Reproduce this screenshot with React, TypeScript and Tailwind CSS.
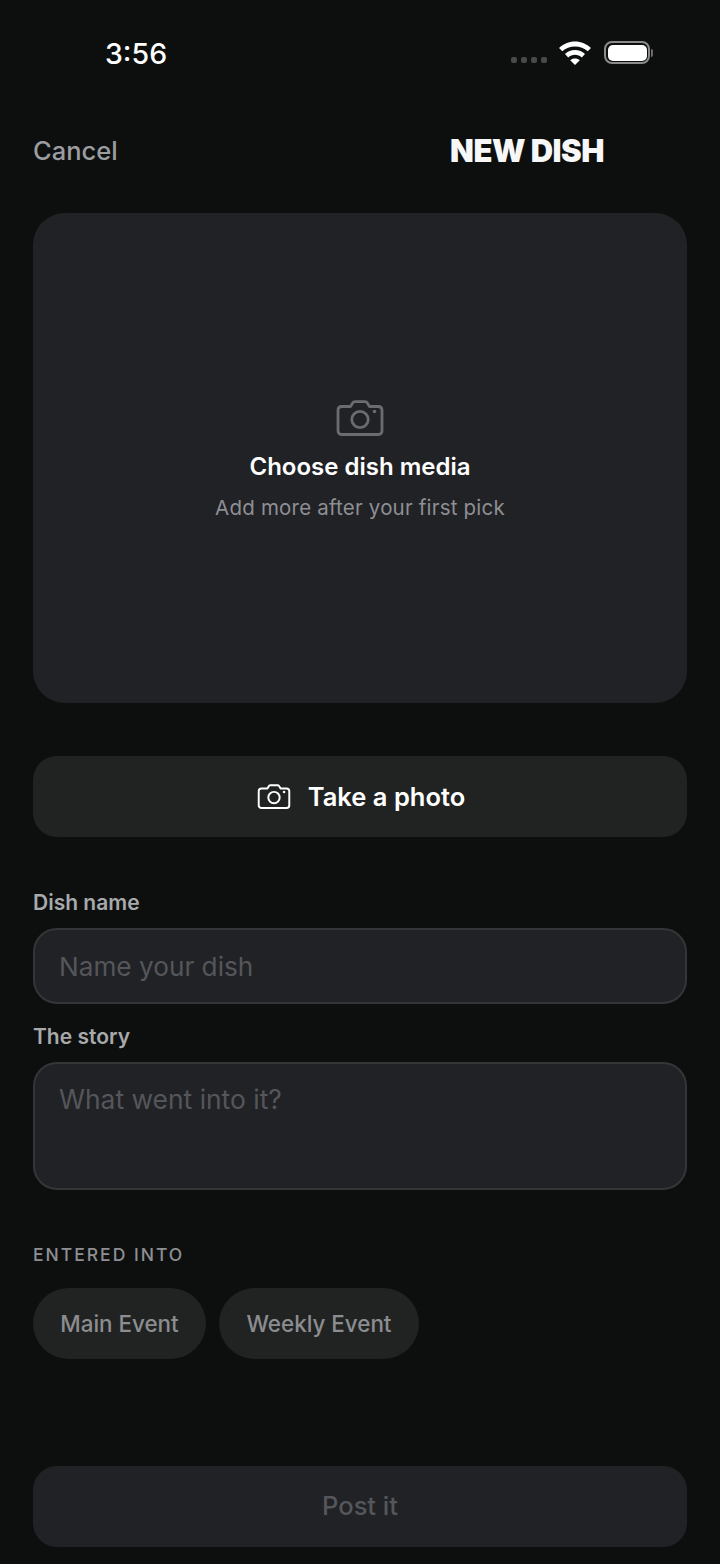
function CameraIcon({ className }: { className?: string }) {
  return (
    <svg viewBox="0 0 48 36" fill="none" stroke="currentColor" strokeWidth="2.800" strokeLinejoin="round" className={className}>
      <path d="M6 6.500h8.500l2.200-3.600c.5-.8 1.200-1.200 2.100-1.200h10.400c.9 0 1.600.4 2.100 1.200l2.200 3.600H42c2.400 0 4 1.600 4 4v20c0 2.400-1.600 4-4 4H6c-2.400 0-4-1.600-4-4v-20c0-2.400 1.600-4 4-4z" />
      <circle cx="24" cy="19.500" r="8.200" />
      <circle cx="38.500" cy="11.500" r="1.800" fill="currentColor" stroke="none" />
    </svg>
  );
}

function StatusBar() {
  return (
    <div className="flex h-[106px] items-start justify-between pl-[105px] pr-[67px] pt-[36px]">
      <span className="text-[28.500px] leading-[36px] font-medium text-white">3:56</span>
      <div className="flex items-center pt-[4px]">
        <div className="mt-[15px] flex gap-[4px]">
          <span className="h-[6px] w-[6px] rounded-[2px] bg-[#48494a]" />
          <span className="h-[6px] w-[6px] rounded-[2px] bg-[#48494a]" />
          <span className="h-[6px] w-[6px] rounded-[2px] bg-[#48494a]" />
          <span className="h-[6px] w-[6px] rounded-[2px] bg-[#48494a]" />
        </div>
        <svg viewBox="0 0 32 24" className="ml-[11px] h-[25.500px] w-[34px]" fill="white">
          <path d="M16 1.500c5.800 0 11 2.300 15 6l-3 3.200C24.800 7.700 20.600 6 16 6S7.200 7.700 4 10.700L1 7.500c4-3.700 9.200-6 15-6z" />
          <path d="M16 9.500c3.600 0 6.900 1.400 9.400 3.700l-3 3.200c-1.700-1.600-4-2.500-6.400-2.500s-4.700.9-6.400 2.500l-3-3.200c2.500-2.300 5.800-3.700 9.400-3.700z" />
          <path d="M16 17.300c1.700 0 3.300.6 4.500 1.700L16 23.500 11.500 19c1.200-1.100 2.800-1.700 4.500-1.700z" />
        </svg>
        <div className="ml-[12px] flex items-center">
          <div className="flex h-[23px] w-[46px] items-center justify-center rounded-[8px] border-2 border-[#8b8b8b]">
            <div className="h-[16px] w-[39px] rounded-[5px] bg-white" />
          </div>
          <div className="ml-[1px] h-[8px] w-[2px] rounded-r-[2px] bg-[#6b6b6b]" />
        </div>
      </div>
    </div>
  );
}

export default function App() {
  return (
    <div className="flex h-[1564px] w-[720px] flex-col overflow-hidden bg-[#0d0f0f] font-['Inter',sans-serif]">
      <StatusBar />
      <div className="flex flex-col px-[33px]">
        <div className="flex h-[88px] items-center justify-between pr-[83px] pt-[1px]">
          <span className="text-[25.500px] font-medium leading-[32px] text-[#9c9da0]">Cancel</span>
          <span className="text-[31px] font-black leading-[34px] tracking-[-0.5px] text-[#f7f7f7]">NEW DISH</span>
        </div>

        <button className="mt-[19px] flex h-[490px] flex-col items-center rounded-[32px] bg-[#212226] pt-[187px]">
          <CameraIcon className="h-[36px] w-[48px] text-[#6b6c70]" />
          <span className="mt-[17px] text-[24px] font-semibold leading-[28px] text-white">Choose dish media</span>
          <span className="mt-[14px] text-[20.500px] leading-[26px] tracking-[0.2px] text-[#8e8f93]">Add more after your first pick</span>
        </button>

        <button className="mt-[53px] flex h-[81px] items-center justify-center gap-[17px] rounded-[24px] bg-[#212322] pl-[2px]">
          <CameraIcon className="h-[25px] w-[34px] text-white" />
          <span className="text-[25.500px] font-semibold leading-[30px] text-white">Take a photo</span>
        </button>

        <label className="mt-[53px] text-[21px] font-semibold leading-[26px] text-[#a8a9ab]">Dish name</label>
        <div className="mt-[12px] flex h-[76px] items-center rounded-[24px] border-2 border-[#333537] bg-[#212226] px-[24px] pt-[2px]">
          <span className="text-[26.200px] leading-[32px] text-[#55565a]">Name your dish</span>
        </div>

        <label className="mt-[20px] text-[21px] font-semibold leading-[26px] text-[#a8a9ab]">The story</label>
        <div className="mt-[12px] h-[128px] rounded-[24px] border-2 border-[#333537] bg-[#212226] px-[24px] pt-[19px]">
          <span className="text-[26.400px] leading-[32px] text-[#55565a]">What went into it?</span>
        </div>

        <span className="mt-[54px] text-[17.500px] font-medium leading-[22px] tracking-[2px] text-[#8e8f93]">ENTERED INTO</span>
        <div className="mt-[22px] flex gap-[13px]">
          <button className="flex h-[71px] w-[173px] items-center justify-center rounded-full bg-[#212322] pt-[1px] text-[22.400px] font-medium text-[#8c8d90]">Main Event</button>
          <button className="flex h-[71px] w-[200px] items-center justify-center rounded-full bg-[#212322] pt-[1px] text-[22.400px] font-medium text-[#8c8d90]">Weekly Event</button>
        </div>

        <button className="mt-[107px] flex h-[81px] items-center justify-center rounded-[24px] bg-[#212226] text-[25.500px] font-medium text-[#55565a]">Post it</button>
      </div>
    </div>
  );
}
